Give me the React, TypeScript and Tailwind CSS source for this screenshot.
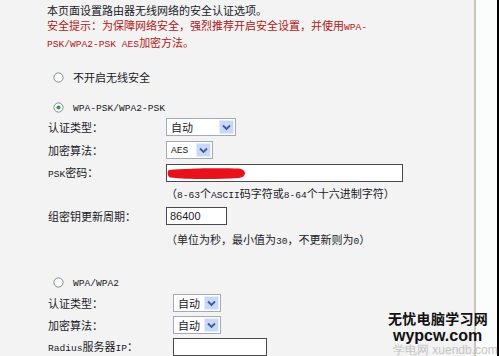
import React from "react";

const M = ({ children }: { children: React.ReactNode }) => (
  <span className="font-['Liberation_Mono',monospace] text-[9.6px]">{children}</span>
);

const RadioIcon = ({ checked }: { checked?: boolean }) => (
  <svg width="11" height="11" viewBox="0 0 11 11" className="shrink-0">
    <circle cx="5.5" cy="5.5" r="4.6" fill="#ffffff" stroke="#7d8a96" strokeWidth="1" />
    {checked && <circle cx="5.5" cy="5.5" r="2.1" fill="#3c9a3c" />}
  </svg>
);

const Radio = ({ checked, mt, children }: { checked?: boolean; mt: string; children: React.ReactNode }) => (
  <div className={`flex items-center h-[16px] pl-[6px] gap-[9px] ${mt}`}>
    <RadioIcon checked={checked} />
    <span>{children}</span>
  </div>
);

const Chevron = () => (
  <svg width="9" height="7" viewBox="0 0 9 7">
    <path d="M1 1.5 L4.5 5 L8 1.5" fill="none" stroke="#3d5a9a" strokeWidth="1.8" />
  </svg>
);

const Select = ({ value, w, mono }: { value: string; w: string; mono?: boolean }) => (
  <div className={`${w} h-[18px] flex items-stretch border border-[#a3aab3] bg-white`}>
    <div className="flex-1 flex items-center pl-[4px]">
      {mono ? <M>{value}</M> : value}
    </div>
    <div className="w-[15px] my-[1px] mr-[1px] bg-[#c9d8f6] border border-[#e6eefc] flex items-center justify-center">
      <Chevron />
    </div>
  </div>
);

const Row = ({ label, lw, mt, children }: { label: React.ReactNode; lw: string; mt: string; children: React.ReactNode }) => (
  <div className={`flex items-center h-[18px] ${mt}`}>
    <div className={`${lw} shrink-0 pl-[1px]`}>{label}</div>
    {children}
  </div>
);

export default function App() {
  return (
    <div className="relative flex w-[499px] h-[356px] overflow-hidden bg-white font-['Noto_Sans_CJK_SC',sans-serif]">
      <div className="w-[476px] h-full shrink-0 bg-[#f3f3f3] border-r-2 border-[#cdc5b5] flex flex-col pl-[47px] text-[11px] leading-[15px] text-[#1a1a26]">
        <div className="mt-[3px] h-[15px] whitespace-nowrap">本页面设置路由器无线网络的安全认证选项。</div>
        <div className="h-[15px] whitespace-nowrap text-[#b01818]">
          安全提示：为保障网络安全，强烈推荐开启安全设置，并使用<M>WPA-</M>
        </div>
        <div className="mt-[2px] h-[15px] whitespace-nowrap text-[#b01818]">
          <M>PSK/WPA2-PSK AES</M>加密方法。
        </div>

        <Radio mt="mt-[20px]">不开启无线安全</Radio>
        <Radio mt="mt-[14px]" checked>
          <M>WPA-PSK/WPA2-PSK</M>
        </Radio>

        <Row label="认证类型：" lw="w-[119px]" mt="mt-[3px]">
          <Select value="自动" w="w-[70px]" />
        </Row>
        <Row label="加密算法：" lw="w-[119px]" mt="mt-[5px]">
          <Select value="AES" w="w-[47px]" mono />
        </Row>
        <Row label={<><M>PSK</M>密码：</>} lw="w-[119px]" mt="mt-[5px]">
          <div className="relative w-[237px] h-[18px] border border-[#4a4a4a] bg-white">
            <svg width="80" height="13" viewBox="0 0 80 13" className="absolute left-[0px] top-[2px]">
              <path d="M2 3 C 20 1, 55 1, 72 1.5 C 80 2.5, 80 10, 72 11 C 50 12.5, 20 12.5, 3 10.5 C 0 9, 0 4, 2 3 Z" fill="#e8121c" />
            </svg>
          </div>
        </Row>
        <div className="mt-[4px] h-[14px] pl-[119px] whitespace-nowrap">
          （<M>8-63</M>个<M>ASCII</M>码字符或<M>8-64</M>个十六进制字符）
        </div>
        <Row label="组密钥更新周期：" lw="w-[119px]" mt="mt-[7px]">
          <div className="w-[61px] h-[18px] border border-[#4a4a4a] bg-white flex items-center pl-[3px] font-['Liberation_Sans',sans-serif] text-[11px]">
            86400
          </div>
        </Row>
        <div className="mt-[7px] h-[14px] pl-[119px] whitespace-nowrap">
          （单位为秒，最小值为<M>30</M>，不更新则为<M>0</M>）
        </div>

        <Radio mt="mt-[28px]">
          <M>WPA/WPA2</M>
        </Radio>
        <Row label="认证类型：" lw="w-[126px]" mt="mt-[4px]">
          <Select value="自动" w="w-[48px]" />
        </Row>
        <Row label="加密算法：" lw="w-[126px]" mt="mt-[4px]">
          <Select value="自动" w="w-[48px]" />
        </Row>
        <Row label={<><M>Radius</M>服务器<M>IP</M>：</>} lw="w-[126px]" mt="mt-[4px]">
          <div className="w-[94px] h-[18px] border border-[#4a4a4a] bg-white" />
        </Row>
      </div>
      <div className="w-[21px] h-full bg-[#fbfdfd]" />
      <div className="w-[2px] h-full bg-black" />

      <div className="absolute left-[388px] top-[311px] flex flex-col items-start">
        <div className="h-[15px] leading-[15px] text-[14px] font-bold text-[#111] tracking-[0.3px] whitespace-nowrap">无忧电脑学习网</div>
        <div className="mt-[2px] h-[16px] leading-[16px] ml-[5px] font-['Liberation_Sans',sans-serif] text-[16px] font-bold text-[#111] whitespace-nowrap">wypcw.com</div>
        <div className="h-[12px] leading-[12px] ml-[5px] font-['Liberation_Sans',sans-serif] text-[12px] text-[#c4c4c4] whitespace-nowrap">学电网 xuendb.com</div>
      </div>
    </div>
  );
}
